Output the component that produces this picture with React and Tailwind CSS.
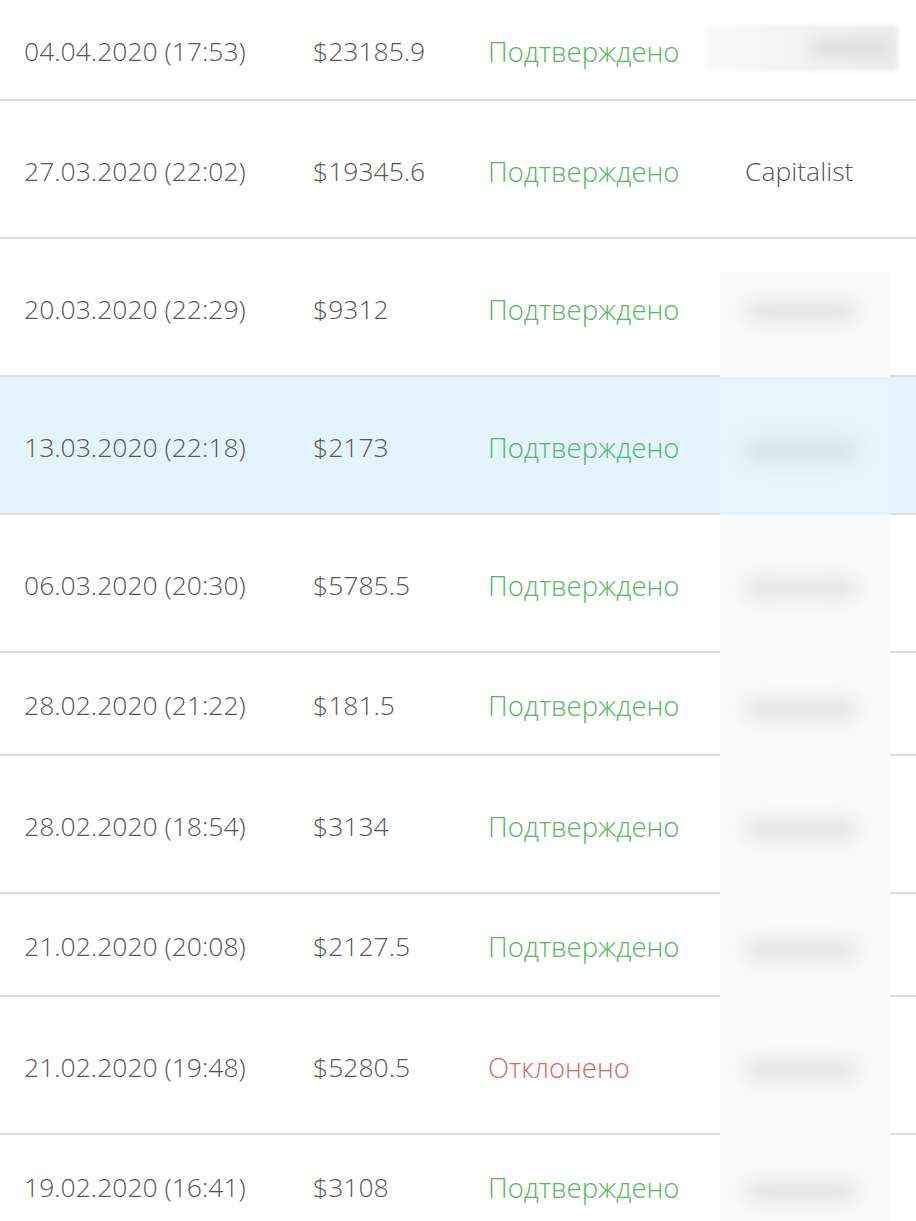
import React from 'react';

const rows = [
    { date: '04.04.2020 (17:53)', sum: '$23185.9', ok: true, h: 'h-[101px]', extra: 'blur' },
    { date: '27.03.2020 (22:02)', sum: '$19345.6', ok: true, h: 'h-[138px]', extra: 'Capitalist' },
    { date: '20.03.2020 (22:29)', sum: '$9312', ok: true, h: 'h-[138px]' },
    { date: '13.03.2020 (22:18)', sum: '$2173', ok: true, h: 'h-[138px]', active: true },
    { date: '06.03.2020 (20:30)', sum: '$5785.5', ok: true, h: 'h-[138px]' },
    { date: '28.02.2020 (21:22)', sum: '$181.5', ok: true, h: 'h-[103px]' },
    { date: '28.02.2020 (18:54)', sum: '$3134', ok: true, h: 'h-[138px]' },
    { date: '21.02.2020 (20:08)', sum: '$2127.5', ok: true, h: 'h-[103px]' },
    { date: '21.02.2020 (19:48)', sum: '$5280.5', ok: false, h: 'h-[138px]' },
    { date: '19.02.2020 (16:41)', sum: '$3108', ok: true, h: 'h-[103px]' },
];

// redacted column segments, lined up with the rows below the Capitalist one
const masks = [
    { h: 'h-[138px]', bg: 'bg-[#e8f4fb]' },
    { h: 'h-[138px]', bg: 'bg-[#fafafa]' },
    { h: 'h-[103px]', bg: 'bg-[#fafafa]' },
    { h: 'h-[138px]', bg: 'bg-[#fafafa]' },
    { h: 'h-[103px]', bg: 'bg-[#fafafa]' },
    { h: 'h-[138px]', bg: 'bg-[#fafafa]' },
    { h: 'h-[103px]', bg: 'bg-[#fafafa]' },
];

const Smudge = ({ tint }) => (
    <div className={`w-[112px] h-[18px] rounded-full blur-[9px] ml-[25px] ${tint ? 'bg-[#d4e1e8]' : 'bg-[#e0e0e0]'}`} />
);

const App = () => {
    return (
        <div
            className="relative w-[916px] h-[1221px] overflow-hidden bg-white text-[26.5px] text-[#575757] font-[350]"
            style={{ fontFamily: '"Open Sans", "Noto Sans", sans-serif' }}
        >
            {rows.map((r, i) => (
                <div
                    key={i}
                    className={`flex items-center border-b-2 border-[#dedede] pt-[5px] ${r.h} ${r.active ? 'bg-[#e4f4fc]' : ''}`}
                >
                    <div className="w-[313px] pl-[24px] whitespace-nowrap">{r.date}</div>
                    <div className="w-[175px] whitespace-nowrap">{r.sum}</div>
                    <div className={`w-[217px] whitespace-nowrap text-[27.5px] ${r.ok ? 'text-[#56b664]' : 'text-[#e06363]'}`}>
                        {r.ok ? 'Подтверждено' : 'Отклонено'}
                    </div>
                    <div className="flex-1">
                        {r.extra === 'blur' && (
                            <div className="w-[193px] h-[46px] -mt-[8px] rounded-sm bg-gradient-to-r from-[#fafafa] via-[#f3f3f3] to-[#ececec] blur-[2px] flex items-center">
                                <div className="ml-[105px] w-[80px] h-[20px] rounded-full bg-[#e2e2e2] blur-[6px]" />
                            </div>
                        )}
                        {r.extra === 'Capitalist' && <span className="pl-[40px]">Capitalist</span>}
                    </div>
                </div>
            ))}

            <div className="absolute left-[720px] top-[272px] w-[170px] bottom-0 flex flex-col">
                <div className="h-[105px] shrink-0 bg-[#fafafa] pt-[30px]">
                    <Smudge />
                </div>
                {masks.map((m, i) => (
                    <div key={i} className={`${m.h} ${m.bg} shrink-0 flex items-center pt-[8px]`}>
                        <Smudge tint={i === 0} />
                    </div>
                ))}
                <div className="flex-1 bg-[#fafafa]" />
            </div>
        </div>
    );
};

export default App;
